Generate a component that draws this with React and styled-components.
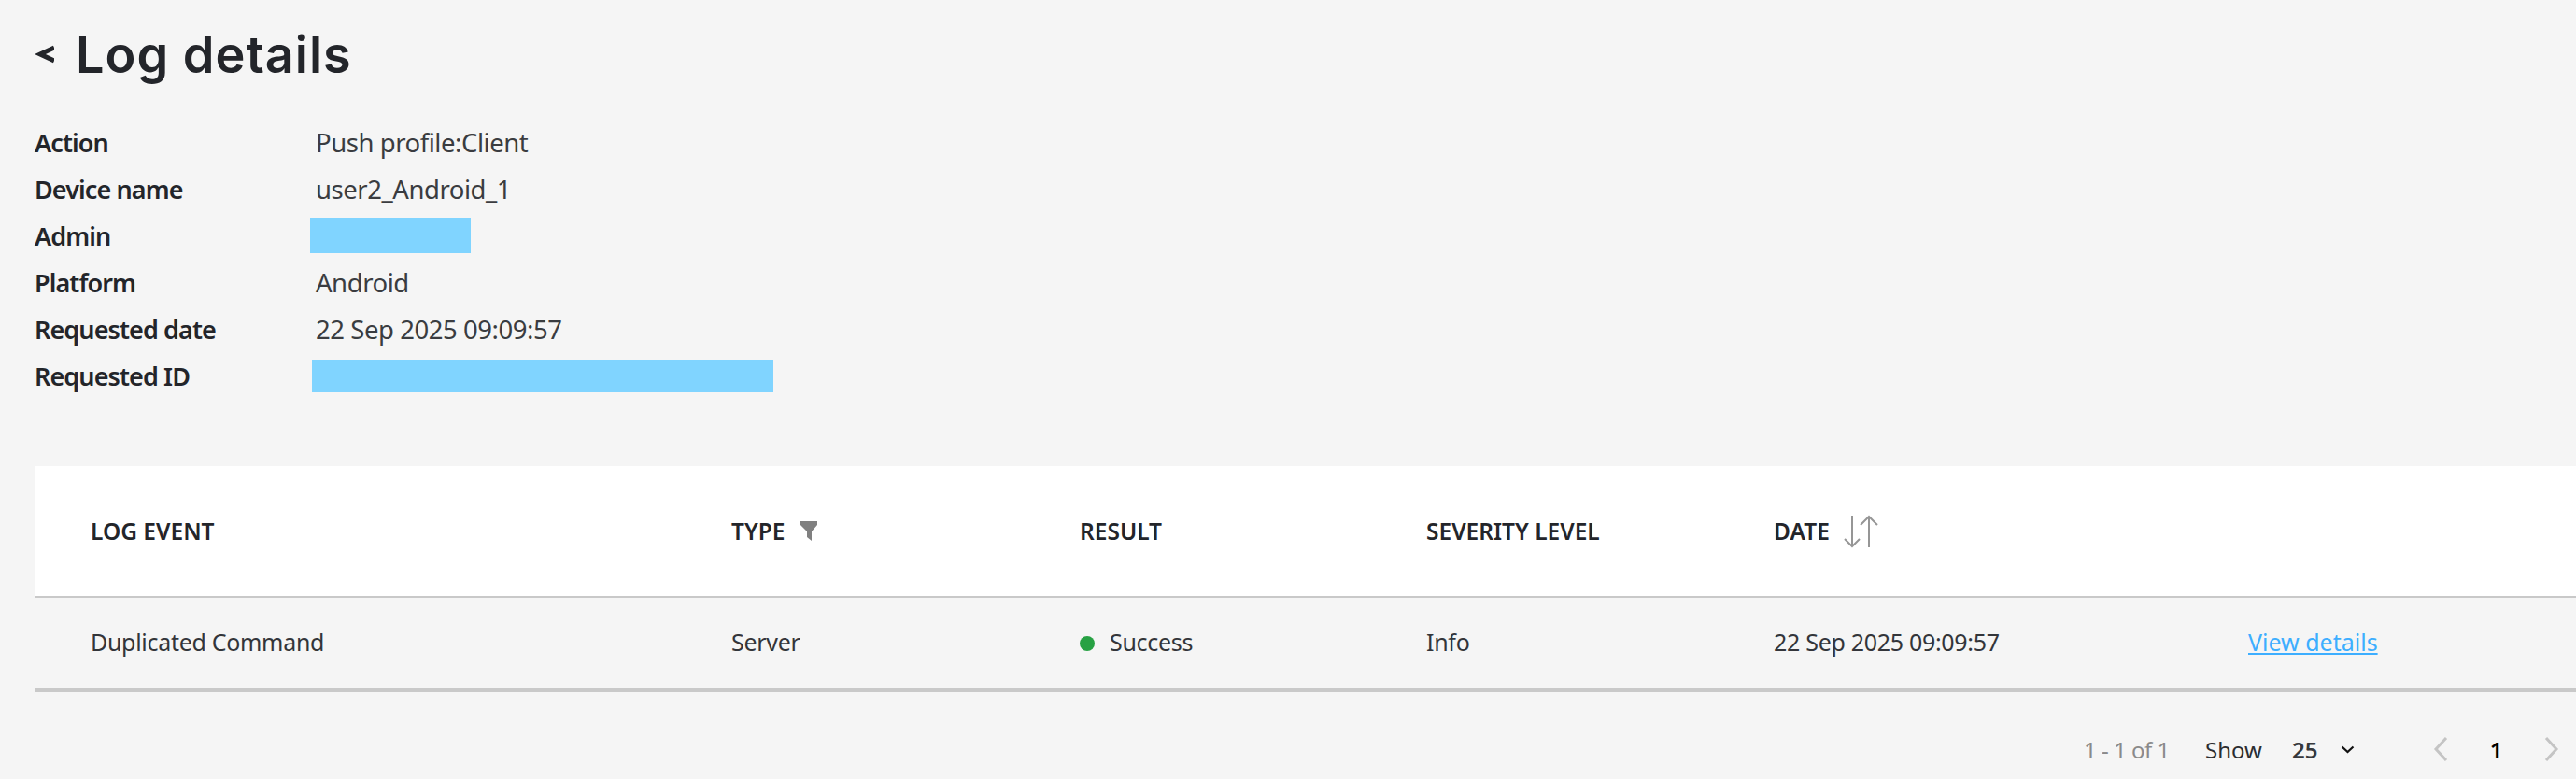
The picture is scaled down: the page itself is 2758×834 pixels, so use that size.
import React from "react"
import styled, { createGlobalStyle } from "styled-components"

const columns = "686px 373px 371px 372px 508px 1fr"

function App() {
  return (
    <>
      <GlobalStyle />
      <Page>
        <TitleRow>
          <BackIcon width="21" height="20" viewBox="0 0 21 20">
            <path d="M21 3 L6 10 L21 17" fill="none" stroke="#23252a" strokeWidth="5" />
          </BackIcon>
          <Title>Log details</Title>
        </TitleRow>
        <InfoList>
          {info.map((item) => (
            <InfoRow key={item.label}>
              <InfoLabel>{item.label}</InfoLabel>
              {item.value ? (
                <InfoValue>{item.value}</InfoValue>
              ) : (
                <Redacted $width={item.width} $height={item.height} $left={item.left} />
              )}
            </InfoRow>
          ))}
        </InfoList>
        <Table>
          <HeaderRow>
            <HeaderCell>LOG EVENT</HeaderCell>
            <HeaderCell>
              TYPE
              <FilterIcon width="18" height="21" viewBox="0 0 18 21">
                <path d="M0 0 H18 V4 L12 11 V21 L7 17 V11 L0 4 Z" fill="#808080" />
              </FilterIcon>
            </HeaderCell>
            <HeaderCell>RESULT</HeaderCell>
            <HeaderCell>SEVERITY LEVEL</HeaderCell>
            <HeaderCell>
              DATE
              <SortIcon width="38" height="36" viewBox="0 0 38 36" fill="none" stroke="#969696" strokeWidth="2">
                <path d="M9 1 V34 M1 26 L9 34 L17 26" />
                <path d="M27 35 V2 M18 11 L27 2 L36 11" />
              </SortIcon>
            </HeaderCell>
            <HeaderCell />
          </HeaderRow>
          <BodyRow>
            <BodyCell>Duplicated Command</BodyCell>
            <BodyCell>Server</BodyCell>
            <BodyCell>
              <StatusDot />
              Success
            </BodyCell>
            <BodyCell>Info</BodyCell>
            <BodyCell>22 Sep 2025 09:09:57</BodyCell>
            <BodyCell>
              <DetailsLink href="#">View details</DetailsLink>
            </BodyCell>
          </BodyRow>
        </Table>
        <Pager>
          <PageCount>1 - 1 of 1</PageCount>
          <ShowLabel>Show</ShowLabel>
          <PageSize>25</PageSize>
          <SizeIcon width="15" height="9" viewBox="0 0 15 9">
            <path d="M1.5 1.5 L7.5 7 L13.5 1.5" fill="none" stroke="#111" strokeWidth="2.2" />
          </SizeIcon>
          <PageArrow width="16" height="26" viewBox="0 0 16 26">
            <path d="M14 1 L3 13 L14 25" fill="none" stroke="#c4c4c4" strokeWidth="3" />
          </PageArrow>
          <PageNumber>1</PageNumber>
          <PageArrow width="16" height="26" viewBox="0 0 16 26">
            <path d="M2 1 L13 13 L2 25" fill="none" stroke="#c4c4c4" strokeWidth="3" />
          </PageArrow>
        </Pager>
      </Page>
    </>
  )
}

export default App

const info = [
  { label: "Action", value: "Push profile:Client" },
  { label: "Device name", value: "user2_Android_1" },
  { label: "Admin", width: 172, height: 38, left: -6 },
  { label: "Platform", value: "Android" },
  { label: "Requested date", value: "22 Sep 2025 09:09:57" },
  { label: "Requested ID", width: 494, height: 35, left: -4 },
]

const GlobalStyle = createGlobalStyle`
  html, body {
    margin: 0;
    background: #f5f5f5;
    overflow: hidden;
  }
  body {
    font-family: "Noto Sans", "Open Sans", sans-serif;
    color: #23252a;
  }
`

const Page = styled.div`
  width: 2758px;
  height: 834px;
  padding-left: 37px;
  box-sizing: border-box;
  overflow: hidden;
`

const TitleRow = styled.div`
  display: flex;
  align-items: center;
  box-sizing: border-box;
  height: 127px;
  padding-bottom: 10px;
`

const BackIcon = styled.svg`
  margin-right: 23px;
  margin-top: -2px;
`

const Title = styled.h1`
  margin: 0;
  font-family: "Inter", sans-serif;
  font-size: 54px;
  font-weight: 600;
  letter-spacing: 1px;
  line-height: 1;
`

const InfoList = styled.div`
  display: flex;
  flex-direction: column;
  padding-bottom: 72px;
`

const InfoRow = styled.div`
  display: flex;
  align-items: center;
  height: 50px;
`

const InfoLabel = styled.div`
  width: 301px;
  font-size: 27px;
  font-weight: 600;
  letter-spacing: -0.9px;
`

const InfoValue = styled.div`
  font-size: 27.5px;
  letter-spacing: -0.45px;
  color: #3a3c40;
`

const Redacted = styled.div`
  width: ${({ $width }) => $width}px;
  height: ${({ $height }) => $height}px;
  margin-left: ${({ $left }) => $left}px;
  background: #80d4ff;
`

const Table = styled.div`
  display: flex;
  flex-direction: column;
`

const HeaderRow = styled.div`
  display: grid;
  grid-template-columns: ${columns};
  align-items: center;
  box-sizing: border-box;
  height: 141px;
  padding-left: 60px;
  background: #fff;
  border-bottom: 2px solid #c9c9c9;
`

const HeaderCell = styled.div`
  display: flex;
  align-items: center;
  font-size: 24.5px;
  font-weight: 600;
`

const FilterIcon = styled.svg`
  margin-left: 17px;
`

const SortIcon = styled.svg`
  margin-left: 15px;
`

const BodyRow = styled.div`
  display: grid;
  grid-template-columns: ${columns};
  align-items: center;
  box-sizing: border-box;
  height: 101px;
  padding-left: 60px;
  padding-bottom: 3px;
  border-bottom: 4px solid #c9c9c9;
`

const BodyCell = styled.div`
  display: flex;
  align-items: center;
  font-size: 25px;
  letter-spacing: -0.3px;
  color: #33353a;
`

const StatusDot = styled.span`
  width: 16px;
  height: 16px;
  margin-top: 3px;
  margin-right: 16px;
  border-radius: 50%;
  background: #27a143;
`

const DetailsLink = styled.a`
  color: #3daeff;
  text-decoration: underline;
  letter-spacing: 0;
`

const Pager = styled.div`
  display: flex;
  align-items: center;
  height: 122px;
  padding-left: 2194px;
  font-size: 24px;
`

const PageCount = styled.span`
  width: 130px;
  letter-spacing: -0.5px;
  color: #8a8a8a;
`

const ShowLabel = styled.span`
  width: 93px;
  color: #2b2d31;
`

const PageSize = styled.span`
  width: 52px;
  font-weight: 600;
  color: #36383c;
`

const SizeIcon = styled.svg`
  margin-right: 84px;
`

const PageArrow = styled.svg``

const PageNumber = styled.span`
  width: 103px;
  text-align: center;
  font-weight: 600;
  color: #000;
`
